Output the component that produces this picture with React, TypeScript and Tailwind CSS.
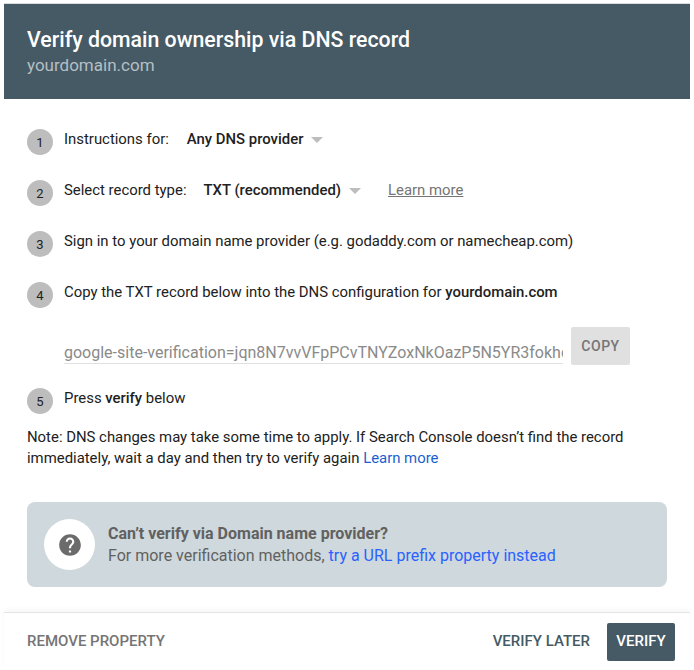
import React from 'react'

type StepProps = {
  num: number
  children: React.ReactNode
}

function Step(props: StepProps) {
  return (
    <div className="flex h-[26px] items-start">
      <div className="flex h-[26px] w-[26px] shrink-0 items-center justify-center rounded-full bg-[#bdbdbd] pt-[2px] text-[13px] text-[#212121]">
        {props.num}
      </div>
      <div className="ml-[11px] flex h-[20px] items-center whitespace-nowrap text-[14.9px] text-[#212121]">
        {props.children}
      </div>
    </div>
  )
}

function Caret() {
  return <span className="ml-[8px] mt-[1px] h-0 w-0 border-x-[6px] border-t-[6px] border-x-transparent border-t-[#bdbdbd]" />
}

export default function App() {
  return (
    <div className="h-[670px] w-[694px] bg-white pt-[3px] font-['Roboto',sans-serif]">
      <div className="mx-[4px] h-[96px] border-t border-[#d8dcde] bg-[#455a64] pl-[23px] pt-[22px]">
        <div className="whitespace-nowrap text-[21.3px] font-medium leading-[28px] text-white">Verify domain ownership via DNS record</div>
        <div className="text-[17px] leading-[22px] text-[#b5bfc4]">yourdomain.com</div>
      </div>

      <div className="px-[27px] pt-[30px]">
        <div className="flex flex-col gap-[25px]">
          <Step num={1}>
            <span>Instructions for:</span>
            <span className="ml-[18px] font-medium">Any DNS provider</span>
            <Caret />
          </Step>
          <Step num={2}>
            <span>Select record type:</span>
            <span className="ml-[17px] font-medium">TXT (recommended)</span>
            <Caret />
            <span className="ml-[27px] text-[#757575] underline">Learn more</span>
          </Step>
          <Step num={3}>Sign in to your domain name provider (e.g. godaddy.com or namecheap.com)</Step>
          <Step num={4}>
            <span>Copy the TXT record below into the DNS configuration for&nbsp;</span>
            <span className="font-medium">yourdomain.com</span>
          </Step>
        </div>

        <div className="ml-[37px] mt-[19px] flex items-start">
          <div className="mt-[7px] h-[30px] w-[499px] overflow-hidden whitespace-nowrap border-b border-[#e0e0e0] pt-[9px] text-[16px] leading-[20px] text-[#8a8a8a]">
            google-site-verification=jqn8N7vvVFpPCvTNYZoxNkOazP5N5YR3fokhdQ2mXc
          </div>
          <div className="ml-[8px] flex h-[38px] w-[59px] items-center justify-center rounded-[2px] bg-[#e0e0e0] text-[14px] font-medium tracking-[0.5px] text-[#757575]">
            COPY
          </div>
        </div>

        <div className="mt-[23px]">
          <Step num={5}>
            <span>Press&nbsp;</span>
            <span className="font-medium">verify</span>
            <span>&nbsp;below</span>
          </Step>
        </div>

        <div className="mt-[13px] whitespace-nowrap text-[14.9px] leading-[21px] text-[#212121]">
          Note: DNS changes may take some time to apply. If Search Console doesn’t find the record
          <br />
          immediately, wait a day and then try to verify again <span className="text-[#1a5fd0]">Learn more</span>
        </div>

        <div className="mt-[33px] flex h-[85px] w-[640px] items-center rounded-[8px] bg-[#cfd8dc] pl-[17px]">
          <div className="flex h-[51px] w-[51px] items-center justify-center rounded-full bg-white">
            <svg width="26" height="26" viewBox="0 0 24 24" fill="#6b6b6b">
              <path d="M12 2C6.48 2 2 6.48 2 12s4.48 10 10 10 10-4.48 10-10S17.52 2 12 2zm1 17h-2v-2h2v2zm2.07-7.75l-.9.92C13.45 12.9 13 13.5 13 15h-2v-.5c0-1.1.45-2.1 1.17-2.83l1.24-1.26c.37-.36.59-.86.59-1.41 0-1.1-.9-2-2-2s-2 .9-2 2H8c0-2.21 1.79-4 4-4s4 1.79 4 4c0 .88-.36 1.68-.93 2.25z" />
            </svg>
          </div>
          <div className="ml-[13px] text-[16px] leading-[22px] text-[#616161]">
            <div className="font-bold">Can’t verify via Domain name provider?</div>
            <div>
              For more verification methods, <span className="text-[#2962ff]">try a URL prefix property instead</span>
            </div>
          </div>
        </div>
      </div>

      <div className="mx-[4px] mt-[25px] flex h-[58px] items-center justify-between border-t border-[#e4e4e4] pl-[23px] pr-[15px] shadow-[0_-3px_5px_rgba(0,0,0,0.03)]">
        <div className="text-[15px] font-medium text-[#757575]">REMOVE PROPERTY</div>
        <div className="flex items-center">
          <div className="text-[15px] font-medium text-[#455a64]">VERIFY LATER</div>
          <div className="ml-[17px] flex h-[38px] w-[68px] items-center justify-center rounded-[2px] bg-[#455a64] text-[15px] font-medium text-white">
            VERIFY
          </div>
        </div>
      </div>
    </div>
  )
}
